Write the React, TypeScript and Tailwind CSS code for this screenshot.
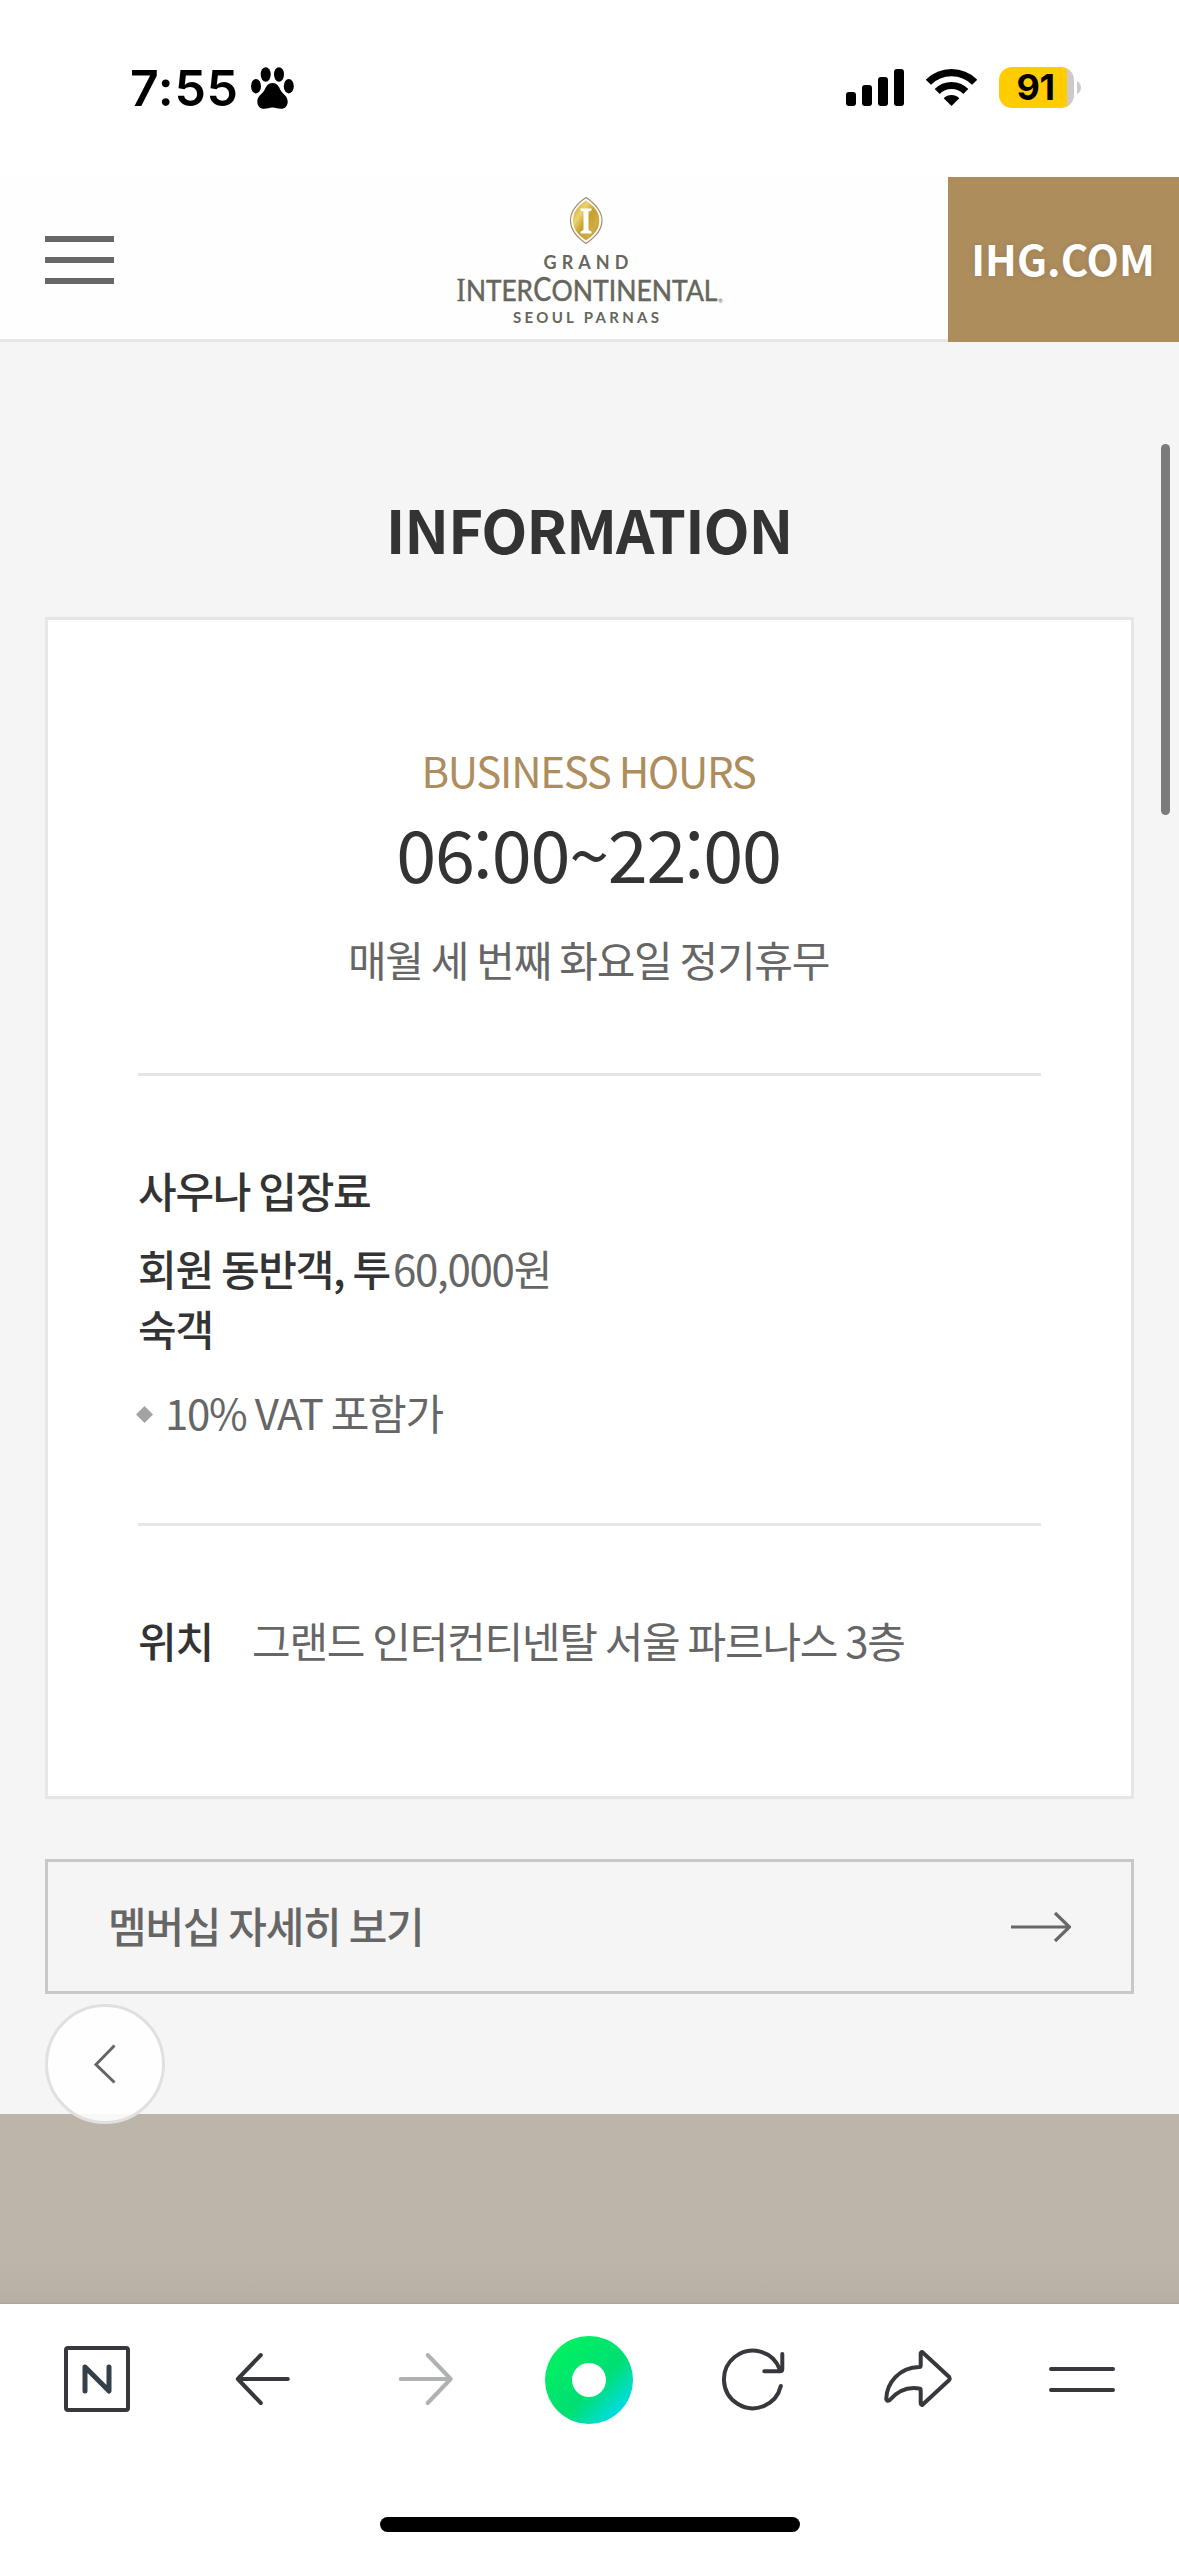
import type { ReactNode } from "react";

function StatusBar() {
  return (
    <div className="flex h-[177px] items-start justify-between pl-[130px] pr-[98px] font-['Inter',sans-serif] text-black">
      <div className="flex items-center pt-[58px]">
        <span className="w-[121px] text-[50px] font-semibold leading-[60px] tracking-[0.7px]">7:55</span>
        <svg className="h-[42px] w-[43px]" viewBox="0 0 43 42" fill="black">
          <ellipse cx="14.7" cy="7.5" rx="5" ry="7.3" />
          <ellipse cx="28" cy="7.5" rx="5" ry="7.3" />
          <ellipse cx="5" cy="19.2" rx="5" ry="7.3" />
          <ellipse cx="37.8" cy="19.2" rx="5" ry="7.3" />
          <path d="M21.5 16C25.8 16 27.9 19.3 29.5 23C31 26.6 36.7 28.8 36.7 34.4C36.7 38.9 34 41.7 30 41.7C26.5 41.7 25 40.4 21.5 40.4C18 40.4 16.5 41.7 13 41.7C9 41.7 6.3 38.9 6.3 34.4C6.3 28.8 12 26.6 13.5 23C15.1 19.3 17.2 16 21.5 16Z" />
        </svg>
      </div>
      <div className="flex items-start pt-[67px]">
        <svg className="mt-[2px] h-[37px] w-[58px]" viewBox="0 0 58 37" fill="black">
          <rect x="0" y="23" width="10" height="14" rx="3" />
          <rect x="16" y="16" width="10" height="21" rx="3" />
          <rect x="32" y="8" width="10" height="29" rx="3" />
          <rect x="48" y="0" width="10" height="37" rx="3" />
        </svg>
        <svg className="ml-[22px] mt-[2px] h-[37px] w-[51px]" viewBox="0 0 51 37">
          <path d="M2.4 13.3A32.6 32.6 0 0 1 48.6 13.3" fill="none" stroke="black" strokeWidth="7.2" />
          <path d="M11.2 22.5A20 20 0 0 1 39.8 22.5" fill="none" stroke="black" strokeWidth="7" />
          <path d="M25.5 37L17.7 29.2C22 25 29 25 33.3 29.2Z" fill="black" />
        </svg>
        <div className="ml-[22px] flex h-[41px] w-[75px] items-center justify-center rounded-[13px] bg-[linear-gradient(to_right,#ffcc00_68px,#cccacc_68px)]">
          <span className="pr-[2px] text-[36px] font-bold leading-[41px] tracking-[-0.5px]">91</span>
        </div>
        <svg className="ml-[3px] mt-[14px] h-[13px] w-[4px]" viewBox="0 0 4 13">
          <path d="M0 0C5.3 2.4 5.3 10.6 0 13Z" fill="#cccacc" />
        </svg>
      </div>
    </div>
  );
}

function Logo() {
  return (
    <svg
      className="h-[140px] w-[280px]"
      viewBox="450 190 280 140"
      fontFamily="Lato, sans-serif"
      fill="#66665c"
    >
      <defs>
        <linearGradient id="gem" x1="0" y1="0" x2="1" y2="1">
          <stop offset="0" stopColor="#b8922a" />
          <stop offset="0.3" stopColor="#ecd46e" />
          <stop offset="0.5" stopColor="#c6a030" />
          <stop offset="0.75" stopColor="#cfae44" />
          <stop offset="1" stopColor="#a67d1e" />
        </linearGradient>
      </defs>
      <path d="M586 197.500C597 205 602 212 602 220.500C602 229 597 236 586 243.500C575 236 570.500 229 570.500 220.500C570.500 212 575 205 586 197.500Z" fill="#fff" stroke="#a58a6c" strokeWidth="1.200" />
      <path d="M586 200.500C595.500 207 599.300 213 599.300 220.500C599.300 228 595.500 234 586 240.500C576.500 234 573 228 573 220.500C573 213 576.500 207 586 200.500Z" fill="url(#gem)" />
      <path d="M580.500 208.500H591.500V210.500L588.500 211.500V230L591.500 231.500V233.500H580.500V231.500L583.500 230V211.500L580.500 210.500Z" fill="#fff" />
      <text x="543.500" y="269" fontSize="18" fontWeight="700" textLength="85">GRAND</text>
      <g stroke="#66665c" strokeWidth="0.500">
        <text x="456.500" y="301" fontSize="34" fontFamily="'Liberation Serif', serif" textLength="9" lengthAdjust="spacingAndGlyphs">I</text>
        <text x="466" y="301" fontSize="28" textLength="67" lengthAdjust="spacingAndGlyphs">NTER</text>
        <text x="533.300" y="301" fontSize="32" textLength="18" lengthAdjust="spacingAndGlyphs">C</text>
        <text x="551.500" y="301" fontSize="28" textLength="166" lengthAdjust="spacingAndGlyphs">ONTINENTAL</text>
      </g>
      <text x="718" y="303" fontSize="6">®</text>
      <text x="513" y="322.700" fontSize="15" fontWeight="700" textLength="146">SEOUL PARNAS</text>
    </svg>
  );
}

function Header() {
  return (
    <header className="grid h-[165px] grid-cols-[450px_280px_1fr_231px] bg-[linear-gradient(to_bottom,#fefefe_162px,#e6e6e6_162px)]">
      <button aria-label="menu" className="ml-[45px] mt-[59px] flex h-[48px] w-[69px] flex-col justify-between">
        <span className="h-[6px] w-full bg-[#676767]" />
        <span className="h-[6px] w-full bg-[#676767]" />
        <span className="h-[6px] w-full bg-[#676767]" />
      </button>
      <div className="pt-[13px]">
        <Logo />
      </div>
      <div />
      <a className="flex items-center justify-center bg-[#ae8d5d] pb-[4px] pr-px text-[42px] font-bold leading-[60px] text-white [text-shadow:0_0_6px_rgba(0,0,0,0.12)]">
        IHG.COM
      </a>
    </header>
  );
}

function Colon() {
  return (
    <span className="relative -top-[5px] inline-flex w-[18px] justify-center text-[92px] font-light leading-[0] tracking-normal">
      :
    </span>
  );
}

function InfoCard() {
  return (
    <section className="mx-[45px] h-[1182px] border-[3px] border-[#e6e6e6] bg-white px-[90px] text-[42px] leading-[60px] tracking-[-1.26px] text-[#666]">
      <div className="flex h-[456px] flex-col items-center border-b-[3px] border-[#e6e6e6] pr-[2px] pt-[120px]">
        <p className="text-[#ae8d5d]">BUSINESS HOURS</p>
        <p className="mt-[2px] h-[100px] whitespace-nowrap text-[72px] leading-[100px] text-[#333]">
          06
          <Colon />
          00~22
          <Colon />
          00
        </p>
        <p className="mt-[27px]">매월 세 번째 화요일 정기휴무</p>
      </div>
      <div className="h-[450px] border-b-[3px] border-[#e6e6e6] pt-[84px]">
        <h3 className="font-medium text-[#333]">사우나 입장료</h3>
        <dl className="mt-[18px] flex">
          <dt className="w-[255px] font-medium text-[#333]">
            회원 동반객, 투
            <br />
            숙객
          </dt>
          <dd>60,000원</dd>
        </dl>
        <p className="mt-[24px] flex items-center">
          <svg className="-ml-[2px] mr-[12px] mt-[5px] h-[17px] w-[17px]" viewBox="0 0 17 17">
            <path d="M8.500 0L17 8.500L8.500 17L0 8.500Z" fill="#a3a3a3" />
          </svg>
          10% VAT 포함가
        </p>
      </div>
      <dl className="flex pt-[84px]">
        <dt className="w-[114px] font-medium text-[#333]">위치</dt>
        <dd>그랜드 인터컨티넨탈 서울 파르나스 3층</dd>
      </dl>
    </section>
  );
}

function ToolButton({ label, children }: { label: string; children: ReactNode }) {
  return (
    <button aria-label={label} className="flex h-[90px] w-[90px] items-center justify-center">
      {children}
    </button>
  );
}

function BrowserBar() {
  const line = {
    fill: "none",
    stroke: "#36383d",
    strokeWidth: 4,
    strokeLinecap: "round" as const,
    strokeLinejoin: "round" as const,
  };
  return (
    <nav className="flex h-[252px] flex-col items-center justify-between bg-white pb-[24px] pt-[30px]">
      <div className="flex w-full justify-between pl-[52px] pr-[52px]">
        <ToolButton label="home">
          <svg className="h-[90px] w-[90px]" viewBox="52 2334 90 90" {...line}>
            <rect x="66" y="2348" width="62" height="62" rx="2" />
            <path d="M85 2391V2367L109 2391V2367" strokeWidth="5" stroke="#353f48" />
          </svg>
        </ToolButton>
        <ToolButton label="back">
          <svg className="h-[90px] w-[90px]" viewBox="216.200 2334 90 90" {...line}>
            <path d="M288 2379H238M261 2355L238 2379L261 2403" />
          </svg>
        </ToolButton>
        <ToolButton label="forward">
          <svg className="h-[90px] w-[90px]" viewBox="380.300 2334 90 90" {...line} stroke="#b0b1b3">
            <path d="M401 2379H451M428 2355L451 2379L428 2403" />
          </svg>
        </ToolButton>
        <ToolButton label="green dot">
          <div className="mt-px flex h-[88px] w-[88px] items-center justify-center rounded-full bg-[linear-gradient(135deg,#00f260_12%,#00e072_52%,#00e072_58%,#00dbe8_86%)]">
            <div className="h-[34px] w-[34px] rounded-full bg-white" />
          </div>
        </ToolButton>
        <ToolButton label="reload">
          <svg className="h-[90px] w-[90px]" viewBox="708.700 2334 90 90" {...line}>
            <path d="M780.500 2386A28.800 28.800 0 1 1 779.500 2369.500M764 2371.300H779.500Q782 2371.300 782 2369V2354" />
          </svg>
        </ToolButton>
        <ToolButton label="share">
          <svg className="h-[90px] w-[90px]" viewBox="872.800 2334 90 90" {...line}>
            <path d="M922 2352L949 2377Q950 2378.500 949 2380L922 2405Q920.500 2404.500 920.500 2403V2390Q920.500 2388.500 919 2388.500C907 2386.500 897 2391.500 889.500 2400Q886.500 2402 886 2399C886.500 2383 899 2367.500 919 2367Q920.500 2367 920.500 2365.500V2354Q920.500 2352.500 922 2352Z" />
          </svg>
        </ToolButton>
        <ToolButton label="menu">
          <svg className="h-[90px] w-[90px]" viewBox="1037 2334 90 90" {...line}>
            <path d="M1051 2369H1113M1051 2390H1113" />
          </svg>
        </ToolButton>
      </div>
      <div className="h-[15px] w-[420px] rounded-full bg-black" />
    </nav>
  );
}

export default function App() {
  return (
    <div className="relative flex h-[2556px] w-[1179px] flex-col overflow-hidden bg-white font-['Noto_Sans_CJK_KR',sans-serif]">
      <StatusBar />
      <Header />
      <main className="h-[1772px] bg-[#f5f5f5]">
        <h2 className="h-[275px] pr-px pt-[146px] text-center text-[60px] font-bold leading-[80px] tracking-[-1.200px] text-[#333]">
          INFORMATION
        </h2>
        <InfoCard />
        <a className="mx-[45px] mt-[60px] flex h-[135px] items-center justify-between border-[3px] border-[#c8c8c8] pl-[60px] pr-[60px] text-[42px] font-medium leading-[60px] tracking-[-1.26px] text-[#666]">
          <span className="pb-[3px]">멤버십 자세히 보기</span>
          <svg className="h-[32px] w-[60px]" viewBox="0 0 60 32" fill="none" stroke="#676867" strokeWidth="3.200">
            <path d="M0 16H58M44 2L58.500 16L44 30" />
          </svg>
        </a>
      </main>
      <div className="h-[190px] bg-[linear-gradient(to_bottom,#beb5aa_150px,#b7aea4_188px,#aaa39c_190px)]" />
      <BrowserBar />
      <button
        aria-label="previous"
        className="absolute left-[45px] top-[2004px] flex h-[120px] w-[120px] items-center justify-center rounded-full border-[3px] border-[#e0e0e0] bg-white/90"
      >
        <svg className="mr-px h-[40px] w-[22px]" viewBox="0 0 22 40" fill="none" stroke="#666" strokeWidth="3">
          <path d="M20.500 1.500L2 20.500L20.500 38.500" />
        </svg>
      </button>
      <div className="absolute left-[1161px] top-[444px] h-[371px] w-[9px] rounded-full bg-[#7b7b7b]" />
    </div>
  );
}
